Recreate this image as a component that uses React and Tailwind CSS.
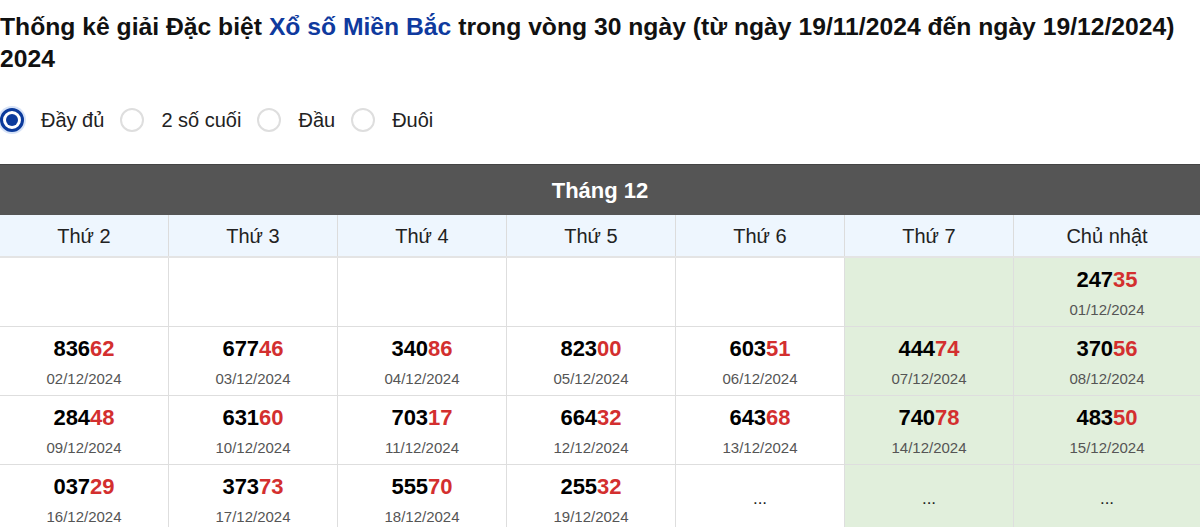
import React from "react";

const days = ["Thứ 2", "Thứ 3", "Thứ 4", "Thứ 5", "Thứ 6", "Thứ 7", "Chủ nhật"];

const rows = [
  [null, null, null, null, null, null, ["24735", "01/12/2024"]],
  [["83662", "02/12/2024"], ["67746", "03/12/2024"], ["34086", "04/12/2024"], ["82300", "05/12/2024"], ["60351", "06/12/2024"], ["44474", "07/12/2024"], ["37056", "08/12/2024"]],
  [["28448", "09/12/2024"], ["63160", "10/12/2024"], ["70317", "11/12/2024"], ["66432", "12/12/2024"], ["64368", "13/12/2024"], ["74078", "14/12/2024"], ["48350", "15/12/2024"]],
  [["03729", "16/12/2024"], ["37373", "17/12/2024"], ["55570", "18/12/2024"], ["25532", "19/12/2024"], "dots", "dots", "dots"],
];

function Radio({ checked, label }) {
  return (
    <label className="flex items-center">
      <span
        className={
          checked
            ? "w-[24px] h-[24px] rounded-full border-[3px] border-[#0b3a9c] flex items-center justify-center bg-white shadow-[0_0_0_2px_#d6e2f7]"
            : "w-[24px] h-[24px] rounded-full border-2 border-[#dedede] bg-white"
        }
      >
        {checked && <span className="w-[12px] h-[12px] rounded-full bg-[#0b3a9c]" />}
      </span>
      <span className="ml-[17px] text-[20px] leading-[24px] text-[#222]">{label}</span>
    </label>
  );
}

export default function App() {
  return (
    <div className="w-[1200px] h-[527px] overflow-hidden bg-white" style={{ fontFamily: '"Liberation Sans", Arial, sans-serif' }}>
      <h1 className="pt-[11px] text-[24.7px] font-bold leading-[32px] text-[#111]">
        Thống kê giải Đặc biệt <span className="text-[#0f3a9e]">Xổ số Miền Bắc</span> trong vòng 30 ngày (từ ngày 19/11/2024 đến ngày 19/12/2024) 2024
      </h1>
      <div className="mt-[33px] flex items-center gap-[16px]">
        <Radio checked label="Đầy đủ" />
        <Radio label="2 số cuối" />
        <Radio label="Đầu" />
        <Radio label="Đuôi" />
      </div>
      <div className="mt-[32px]">
        <div className="h-[51px] bg-[#555555] border-t border-[#444] flex items-center justify-center text-white font-bold text-[22px]">
          Tháng 12
        </div>
        <div className="grid grid-cols-[169px_169px_169px_169px_169px_169px_1fr] bg-[#eef6fe] border-b-2 border-[#e4e4e4]">
          {days.map((d, i) => (
            <div
              key={d}
              className={
                "h-[41px] flex items-center justify-center text-[20px] text-[#222] " +
                (i < 6 ? "border-r border-[#dcdcdc]" : "")
              }
            >
              {d}
            </div>
          ))}
        </div>
        {rows.map((row, ri) => (
          <div key={ri} className="grid grid-cols-[169px_169px_169px_169px_169px_169px_1fr] border-b border-[#dedede]">
            {row.map((cell, ci) => (
              <div
                key={ci}
                className={
                  "h-[68px] flex flex-col items-center " +
                  (ci >= 5 ? "bg-[#e1efdc] " : "bg-white ") +
                  (ci < 6 ? "border-r border-[#dedede] " : "") +
                  (cell === "dots" ? "justify-center" : "")
                }
              >
                {cell === "dots" ? (
                  <span className="text-[17px] text-[#222] leading-none -mt-[2px]">...</span>
                ) : cell ? (
                  <>
                    <div className="pt-[8px] leading-[28px] text-[22px] font-bold text-black">
                      {cell[0].slice(0, 3)}
                      <span className="text-[#d32f2f]">{cell[0].slice(3)}</span>
                    </div>
                    <div className="mt-[4px] leading-[24px] text-[15px] text-[#555]">{cell[1]}</div>
                  </>
                ) : null}
              </div>
            ))}
          </div>
        ))}
      </div>
    </div>
  );
}
